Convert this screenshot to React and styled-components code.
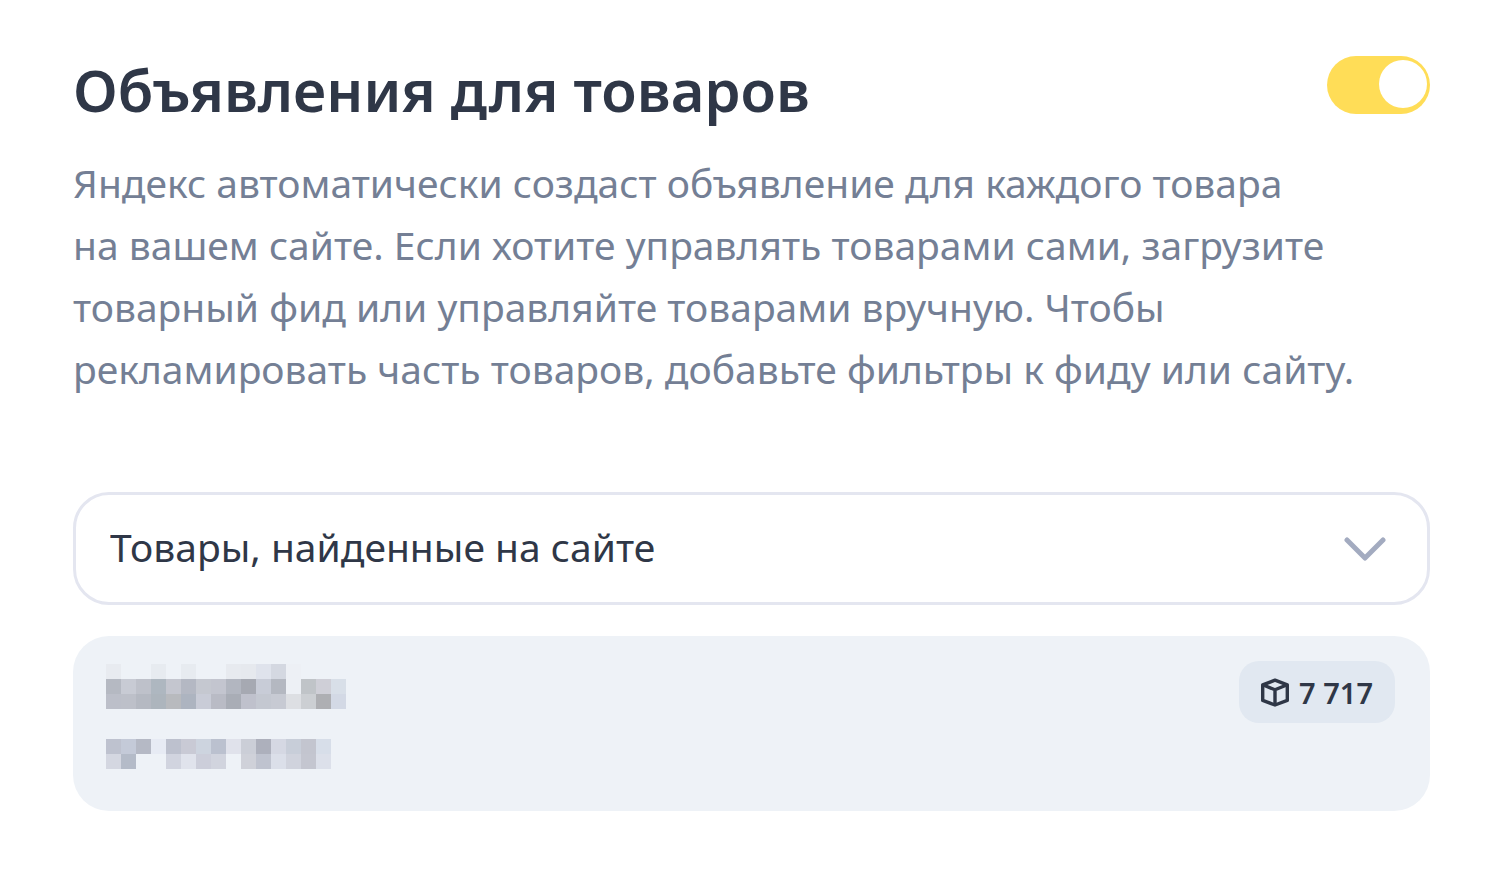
import React, { useState } from 'react'
import styled, { createGlobalStyle } from 'styled-components'

const GlobalStyle = createGlobalStyle`
  * {
    box-sizing: border-box;
  }

  body {
    margin: 0;
    background: #ffffff;
    color: #2f3747;
    font-family: "Noto Sans", "Open Sans", sans-serif;
  }
`

const Card = styled.main`
  display: flex;
  flex-direction: column;
  padding: 56px 76px 64px 73px;
`

const Header = styled.header`
  display: flex;
  align-items: flex-start;
  justify-content: space-between;
`

const Title = styled.h1`
  margin: 0;
  font-size: 58px;
  font-weight: 600;
  line-height: 68px;
`

const Switch = styled.input`
  appearance: none;
  display: flex;
  flex: none;
  justify-content: ${props => props.checked ? 'flex-end' : 'flex-start'};
  width: 103px;
  height: 58px;
  margin: 0;
  padding: 4px 3px;
  border-radius: 29px;
  background: ${props => props.checked ? '#ffdd57' : '#dfe3ec'};
  cursor: pointer;

  &::before {
    content: "";
    width: 48px;
    height: 48px;
    border-radius: 50%;
    background: #ffffff;
  }
`

const Description = styled.p`
  margin: 28px 0 92px;
  color: #747f95;
  font-size: 39px;
  line-height: 62px;
`

const SelectBox = styled.div`
  display: grid;
  align-items: center;
  margin-bottom: 31px;
`

const Select = styled.select`
  appearance: none;
  grid-area: 1 / 1;
  width: 100%;
  height: 113px;
  padding: 0 100px 4px 34px;
  border: 3px solid #e4e6f0;
  border-radius: 36px;
  background: #ffffff;
  color: #2f3747;
  font-family: inherit;
  font-size: 39px;
`

const Chevron = styled.svg`
  grid-area: 1 / 1;
  justify-self: end;
  width: 42px;
  height: 24px;
  margin-right: 44px;
  pointer-events: none;
`

const Source = styled.section`
  display: flex;
  align-items: flex-start;
  justify-content: space-between;
  padding: 25px 35px 42px 33px;
  border-radius: 36px;
  background: #eef2f7;
`

const HiddenText = styled.svg`
  width: 240px;
  height: 105px;
  margin-top: 3px;
`

const Badge = styled.div`
  display: flex;
  align-items: center;
  gap: 10px;
  height: 62px;
  padding: 0 22px;
  border-radius: 20px;
  background: #e1e8f1;
  font-size: 29px;
  font-weight: 600;
`

const BoxIcon = styled.svg`
  width: 28px;
  height: 30px;
`

// one array per row of cells, null leaves the background
const cells = [
  ['#e8ebf0', null, null, '#e7ebf0', null, '#e7ebf0', null, null, '#e7eaef', '#e6e9ee', '#dfe3ec', '#d4d8e1', '#edf0f5', null, null, null],
  ['#b5b9c2', '#c8cbd4', '#bec1ca', '#aeb7c0', '#c4c6cf', '#b4b8c3', '#c5c8d0', '#c3c5cf', '#b2b6c0', '#a6a9b2', '#c8ccd7', '#b4b8c1', '#edf0f5', '#c0c4c8', '#cfcfd7', '#d8dfe8'],
  ['#bcbfc9', '#bdc0c9', '#b5b9c2', '#adb5bd', '#b8babe', '#adb4c0', '#c9ccd7', '#b9bbc5', '#a9adb6', '#bfc1cc', '#c4c8d1', '#c7cad3', '#dddfe3', '#cccfd3', '#aeafb3', '#d3d9e5'],
  [],
  [],
  ['#bec2cf', '#c4cad8', '#b5b9c5', '#e7ebf4', '#bdc1ce', '#c9cad5', '#cdd4df', '#bbc1cf', '#e0e2eb', '#cbced7', '#adb0bc', '#d5d8e3', '#c8ced9', '#c3c5cf', '#d7dee9', null],
  ['#d4d7e1', '#b4bbc8', null, null, '#d1d4df', '#e0e3ec', '#ccceda', '#d1d4de', null, '#cfd1d9', '#bfc3cf', '#dbdfe9', '#d0d3dd', '#c4c6d0', '#dce0ea', null],
]

const Mosaic = () => (
  <HiddenText viewBox="0 0 16 7" shapeRendering="crispEdges" aria-hidden="true">
    {cells.map((row, y) =>
      row.map((fill, x) => fill && (
        <rect key={`${x}-${y}`} x={x} y={y} width="1" height="1" fill={fill} />
      ))
    )}
  </HiddenText>
)

const App = () => {
  const [enabled, setEnabled] = useState(true)

  return (
    <>
      <GlobalStyle />
      <Card>
        <Header>
          <Title id="title">Объявления для товаров</Title>
          <Switch
            type="checkbox"
            role="switch"
            aria-labelledby="title"
            checked={enabled}
            onChange={e => setEnabled(e.target.checked)}
          />
        </Header>
        <Description>
          Яндекс автоматически создаст объявление для каждого товара<br />
          на вашем сайте. Если хотите управлять товарами сами, загрузите<br />
          товарный фид или управляйте товарами вручную. Чтобы<br />
          рекламировать часть товаров, добавьте фильтры к фиду или сайту.
        </Description>
        <SelectBox>
          <Select aria-label="Источник товаров">
            <option>Товары, найденные на сайте</option>
          </Select>
          <Chevron viewBox="0 0 42 24" fill="none" stroke="#a3abc0" strokeWidth="5" strokeLinecap="round" strokeLinejoin="round">
            <path d="M3 3L21 21L39 3" />
          </Chevron>
        </SelectBox>
        <Source>
          <Mosaic />
          <Badge>
            <BoxIcon viewBox="0 0 28 30" fill="none" stroke="#2f3747" strokeWidth="3.4" strokeLinejoin="round">
              <path d="M14 3.2L26.3 7.8V23.4L14 28L1.7 23.4V7.8Z" />
              <path d="M1.7 7.8L14 12.8L26.3 7.8M14 12.8V28" />
            </BoxIcon>
            7 717
          </Badge>
        </Source>
      </Card>
    </>
  )
}

export default App
